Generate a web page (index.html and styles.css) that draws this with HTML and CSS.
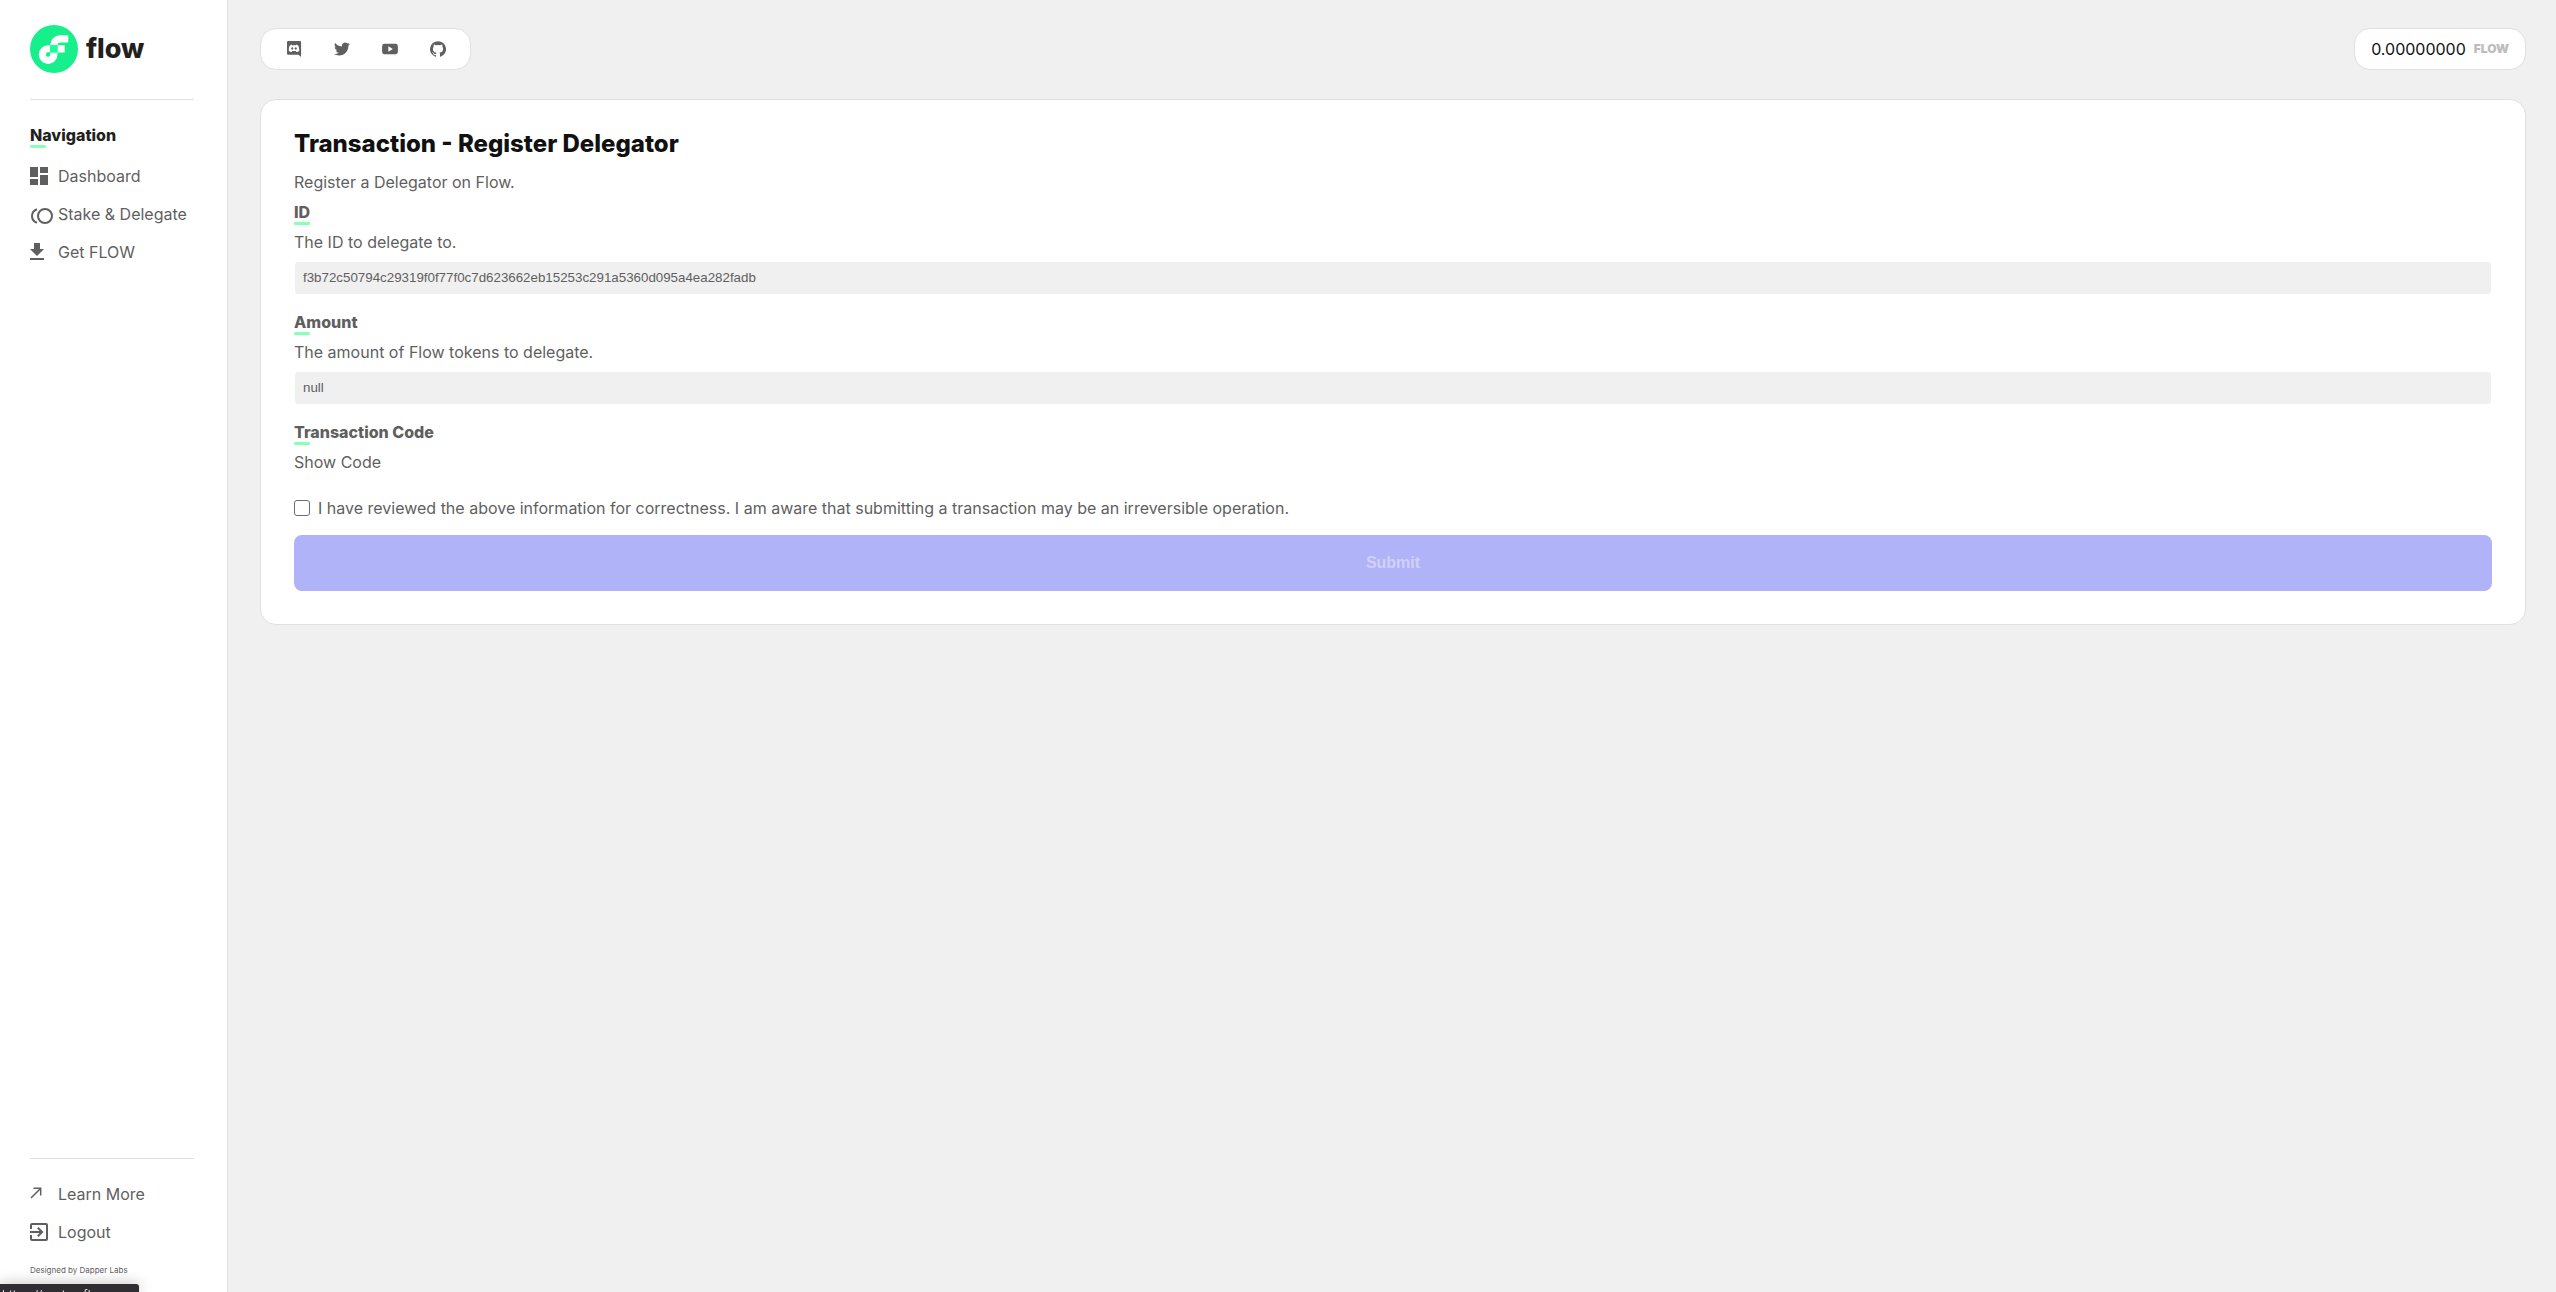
FILE: index.html
```html
<!DOCTYPE html>
<html lang="en">
<head>
<meta charset="utf-8">
<meta name="viewport" content="width=device-width, initial-scale=1">
<title>Flow - Register Delegator</title>
<link rel="stylesheet" href="styles.css">
</head>
<body>
<div class="app">
  <aside class="sidebar">
    <a class="brand" href="#">
      <svg class="brand-mark" viewBox="0 0 101 101" aria-hidden="true">
        <circle cx="50.500" cy="50.500" r="50.500" fill="#16ef8b"/>
        <path fill="#fff" d="M57.800 42.500H73V57.800H57.800zM42.500 62.200a4.600 4.600 0 1 1-4.600-4.600h4.600V42.500h-4.600A19.700 19.700 0 1 0 57.800 62.200v-4.400H42.500zM63.400 36.900H80.400V21.500H63.400A20.900 20.900 0 0 0 42.500 42.500H57.800a5.600 5.600 0 0 1 5.600-5.600z"/>
        <path fill="#16ff99" d="M42.500 42.500H57.800V57.800H42.500z"/>
      </svg>
      <span class="brand-word">flow</span>
    </a>
    <nav class="nav" aria-label="Main">
      <h2 class="nav-title">Navigation</h2>
      <a class="nav-link" href="#"><svg class="icon" viewBox="0 0 18 18" aria-hidden="true"><path d="M0 0h8v10H0zM10 0h8v6h-8zM10 8h8v10h-8zM0 12h8v6H0z"/></svg>Dashboard</a>
      <a class="nav-link" href="#"><svg class="icon icon-wide" viewBox="0 0 24 18" aria-hidden="true"><g fill="none" stroke="#5f5f5f" stroke-width="2"><circle cx="15" cy="11" r="7"/><path d="M7 4.200Q2 6 2 11t5 6.800"/></g></svg>Stake &amp; Delegate</a>
      <a class="nav-link" href="#"><svg class="icon" viewBox="0 0 18 18" aria-hidden="true"><path d="M14 6h-4V0H4v6H0l7 7zM0 15v2h14v-2z"/></svg>Get FLOW</a>
    </nav>
    <div class="sidebar-foot">
      <a class="nav-link" href="#"><svg class="icon" viewBox="0 0 18 18" aria-hidden="true"><path fill="none" stroke="#5f5f5f" stroke-width="1.500" d="M1 13L10.300 3.700M3.500 3.300h7.200v7.200"/></svg>Learn More</a>
      <a class="nav-link" href="#"><svg class="icon" viewBox="3 3 18 18" aria-hidden="true"><path d="M10.090 15.590L11.500 17l5-5-5-5-1.410 1.410L12.670 11H3v2h9.670l-2.580 2.590zM19 3H5a2 2 0 0 0-2 2v4h2V5h14v14H5v-4H3v4a2 2 0 0 0 2 2h14a2 2 0 0 0 2-2V5a2 2 0 0 0-2-2z"/></svg>Logout</a>
      <p class="credit">Designed by Dapper Labs</p>
    </div>
  </aside>
  <main class="main">
    <header class="topbar">
      <div class="pill social">
        <a href="#" aria-label="Discord"><svg viewBox="0 0 16 16"><path fill-rule="evenodd" d="M2.300 0h11.500q1.300 0 1.300 1.300V16l-2.500-2.200H2.300Q1 13.800 1 12.500V1.300Q1 0 2.300 0zM5.500 3.500Q4 4 3.500 5 2.600 7.500 2.700 9.700 4 11 5.600 10.900l.6-.9h3.600l.6.9q1.600.1 2.900-1.200.1-2.200-.8-4.700-.5-1-2-1.500l-.4.700H5.900zM6.200 6.300a1.100 1.200 0 1 0 .1 0zM9.700 6.300a1.100 1.200 0 1 0 .1 0z"/></svg></a>
        <a href="#" aria-label="Twitter"><svg viewBox="0 0 24 24"><path d="M23.950 4.570a10 10 0 0 1-2.820.780 4.960 4.960 0 0 0 2.160-2.720c-.95.550-2 .950-3.130 1.180a4.920 4.920 0 0 0-8.380 4.480C7.690 8.090 4.070 6.130 1.640 3.160a4.820 4.820 0 0 0-.67 2.480c0 1.710.87 3.210 2.190 4.100a4.900 4.900 0 0 1-2.230-.620v.060a4.920 4.920 0 0 0 3.950 4.830 5 5 0 0 1-2.210.080 4.940 4.940 0 0 0 4.600 3.420A9.870 9.870 0 0 1 0 19.540a14 14 0 0 0 7.550 2.210c9.050 0 14-7.500 14-13.980 0-.210 0-.420-.020-.630a9.900 9.900 0 0 0 2.420-2.570z"/></svg></a>
        <a href="#" aria-label="YouTube"><svg viewBox="0 0 24 24"><path fill-rule="evenodd" d="M12 4c3 0 6 .1 8.500.3C22.500 4.500 23.500 5.500 23.700 7.500c.3 3 .3 6 0 9-.2 2-1.200 3-3.200 3.200-5.600.4-11.400.4-17 0-2-.2-3-1.200-3.200-3.200-.3-3-.3-6 0-9C.5 5.500 1.500 4.500 3.500 4.300 6 4.100 9 4 12 4zM9.500 8v8l6.800-4z"/></svg></a>
        <a href="#" aria-label="GitHub"><svg viewBox="0 0 24 24"><path d="M12 .3a12 12 0 0 0-3.790 23.390c.6.110.820-.260.820-.580v-2.030c-3.340.720-4.040-1.610-4.040-1.610-.550-1.390-1.340-1.760-1.340-1.760-1.090-.740.080-.730.080-.730 1.210.080 1.840 1.240 1.840 1.240 1.070 1.830 2.810 1.300 3.490 1 .110-.780.420-1.310.760-1.610-2.660-.300-5.470-1.330-5.470-5.930 0-1.310.470-2.380 1.240-3.220-.130-.300-.540-1.520.120-3.180 0 0 1-.320 3.300 1.230a11.500 11.500 0 0 1 6.010 0c2.290-1.550 3.300-1.230 3.300-1.230.650 1.660.240 2.880.120 3.180.770.840 1.230 1.910 1.230 3.220 0 4.610-2.810 5.620-5.480 5.920.430.370.820 1.100.820 2.220v3.290c0 .320.210.700.820.580A12 12 0 0 0 12 .3z"/></svg></a>
      </div>
      <div class="pill balance"><span>0.00000000</span><span class="unit">FLOW</span></div>
    </header>
    <form class="card">
      <h1>Transaction - Register Delegator</h1>
      <p class="text">Register a Delegator on Flow.</p>
      <h3 class="field-title">ID</h3>
      <label class="text" for="id">The ID to delegate to.</label>
      <input class="field" id="id" type="text" readonly value="f3b72c50794c29319f0f77f0c7d623662eb15253c291a5360d095a4ea282fadb">
      <h3 class="field-title">Amount</h3>
      <label class="text" for="amount">The amount of Flow tokens to delegate.</label>
      <input class="field" id="amount" type="text" readonly value="null">
      <h3 class="field-title">Transaction Code</h3>
      <button class="show-code" type="button">Show Code</button>
      <label class="confirm"><input type="checkbox">I have reviewed the above information for correctness. I am aware that submitting a transaction may be an irreversible operation.</label>
      <button class="submit" type="submit" disabled>Submit</button>
    </form>
  </main>
</div>
<div class="status">https://port.onflow</div>
</body>
</html>
```
FILE: styles.css
```css
* { box-sizing: border-box; }
body {
  margin: 0;
  background: #f0f0f0;
  color: #5f5f5f;
  font: 16px/20px Inter, "Liberation Sans", sans-serif;
}
h1, h2, h3, p { margin: 0; }
a { color: inherit; text-decoration: none; }
svg { display: block; fill: #5f5f5f; }
.app { display: flex; min-height: 100vh; }

.sidebar {
  display: flex;
  flex-direction: column;
  flex: 0 0 228px;
  padding: 25px 33px 14px 30px;
  background: #fff;
  border-right: 1px solid #e0e0e0;
}
.brand {
  display: flex;
  align-items: center;
  gap: 8px;
  padding-bottom: 26px;
  border-bottom: 1px solid #e0e0e0;
}
.brand-mark { width: 48px; height: 48px; }
.brand-word { color: #231f20; font-size: 27px; font-weight: 800; line-height: 48px; }
.nav { padding-top: 25px; }
.nav-title, .field-title {
  font-size: 16px;
  font-weight: 800;
  line-height: 20px;
}
.nav-title { color: #231f20; margin-bottom: 9px; }
.nav-title::after, .field-title::after {
  content: "";
  display: block;
  width: 16px;
  height: 3px;
  border-radius: 1px;
  background: #8affb8;
}
.nav-link {
  display: flex;
  align-items: center;
  height: 38px;
  gap: 10px;
  white-space: nowrap;
}
.icon { flex: none; width: 18px; height: 18px; }
.icon-wide { width: 24px; margin-right: -6px; overflow: visible; }
.sidebar-foot {
  margin-top: auto;
  padding-top: 16px;
  border-top: 1px solid #e0e0e0;
}
.credit { margin-top: 11px; font-size: 8px; line-height: 16px; }

.main { flex: 1; min-width: 0; padding: 28px 30px 28px 32px; }
.topbar {
  display: flex;
  justify-content: space-between;
  margin-bottom: 29px;
}
.pill, .card { background: #fff; border: 1px solid #e0e0e0; }
.pill {
  display: flex;
  align-items: center;
  height: 42px;
  border-radius: 16px;
}
.social { gap: 32px; padding: 0 24px 0 25px; }
.social svg { width: 16px; height: 16px; }
.balance { gap: 8px; padding: 0 16px; color: #111; }
.unit { color: #bdbdbd; font-size: 12px; font-weight: 900; }

.card {
  display: flex;
  flex-direction: column;
  padding: 29px 33px 33px;
  border-radius: 16px;
}
h1 { margin-bottom: 13px; color: #111; font-size: 24px; font-weight: 800; line-height: 30px; }
.text { line-height: 20px; }
.field-title { margin: 10px 0 7px; }
.field {
  height: 32px;
  margin: 10px 1px 8px;
  padding: 0 8px 2px;
  border: 0;
  border-radius: 3px;
  background: #f0f0f0;
  color: #5f5f5f;
  font-family: "Liberation Sans", Arial, sans-serif;
}
.show-code {
  align-self: flex-start;
  padding: 0;
  border: 0;
  background: none;
  color: inherit;
  font: inherit;
}
.confirm { display: flex; align-items: center; gap: 8px; margin-top: 26px; }
.confirm input {
  appearance: none;
  width: 16px;
  height: 16px;
  margin: 0;
  border: 1px solid #6b6b6b;
  border-radius: 3px;
  background: #fff;
}
.submit {
  height: 56px;
  margin-top: 17px;
  border: 0;
  border-radius: 8px;
  background: #b0b3f8;
  color: #d0d1fb;
  font: 700 16px/20px "Liberation Sans", Arial, sans-serif;
}
.status {
  position: fixed;
  left: 0;
  bottom: 0;
  width: 139px;
  height: 8px;
  padding: 3px 0 0 2px;
  overflow: hidden;
  border-radius: 0 3px 0 0;
  background: #302d33;
  color: #d8d8d8;
  box-shadow: 0 0 14px rgba(0, 0, 0, 0.3);
  font: 12px/16px Inter, "Liberation Sans", sans-serif;
}
```
